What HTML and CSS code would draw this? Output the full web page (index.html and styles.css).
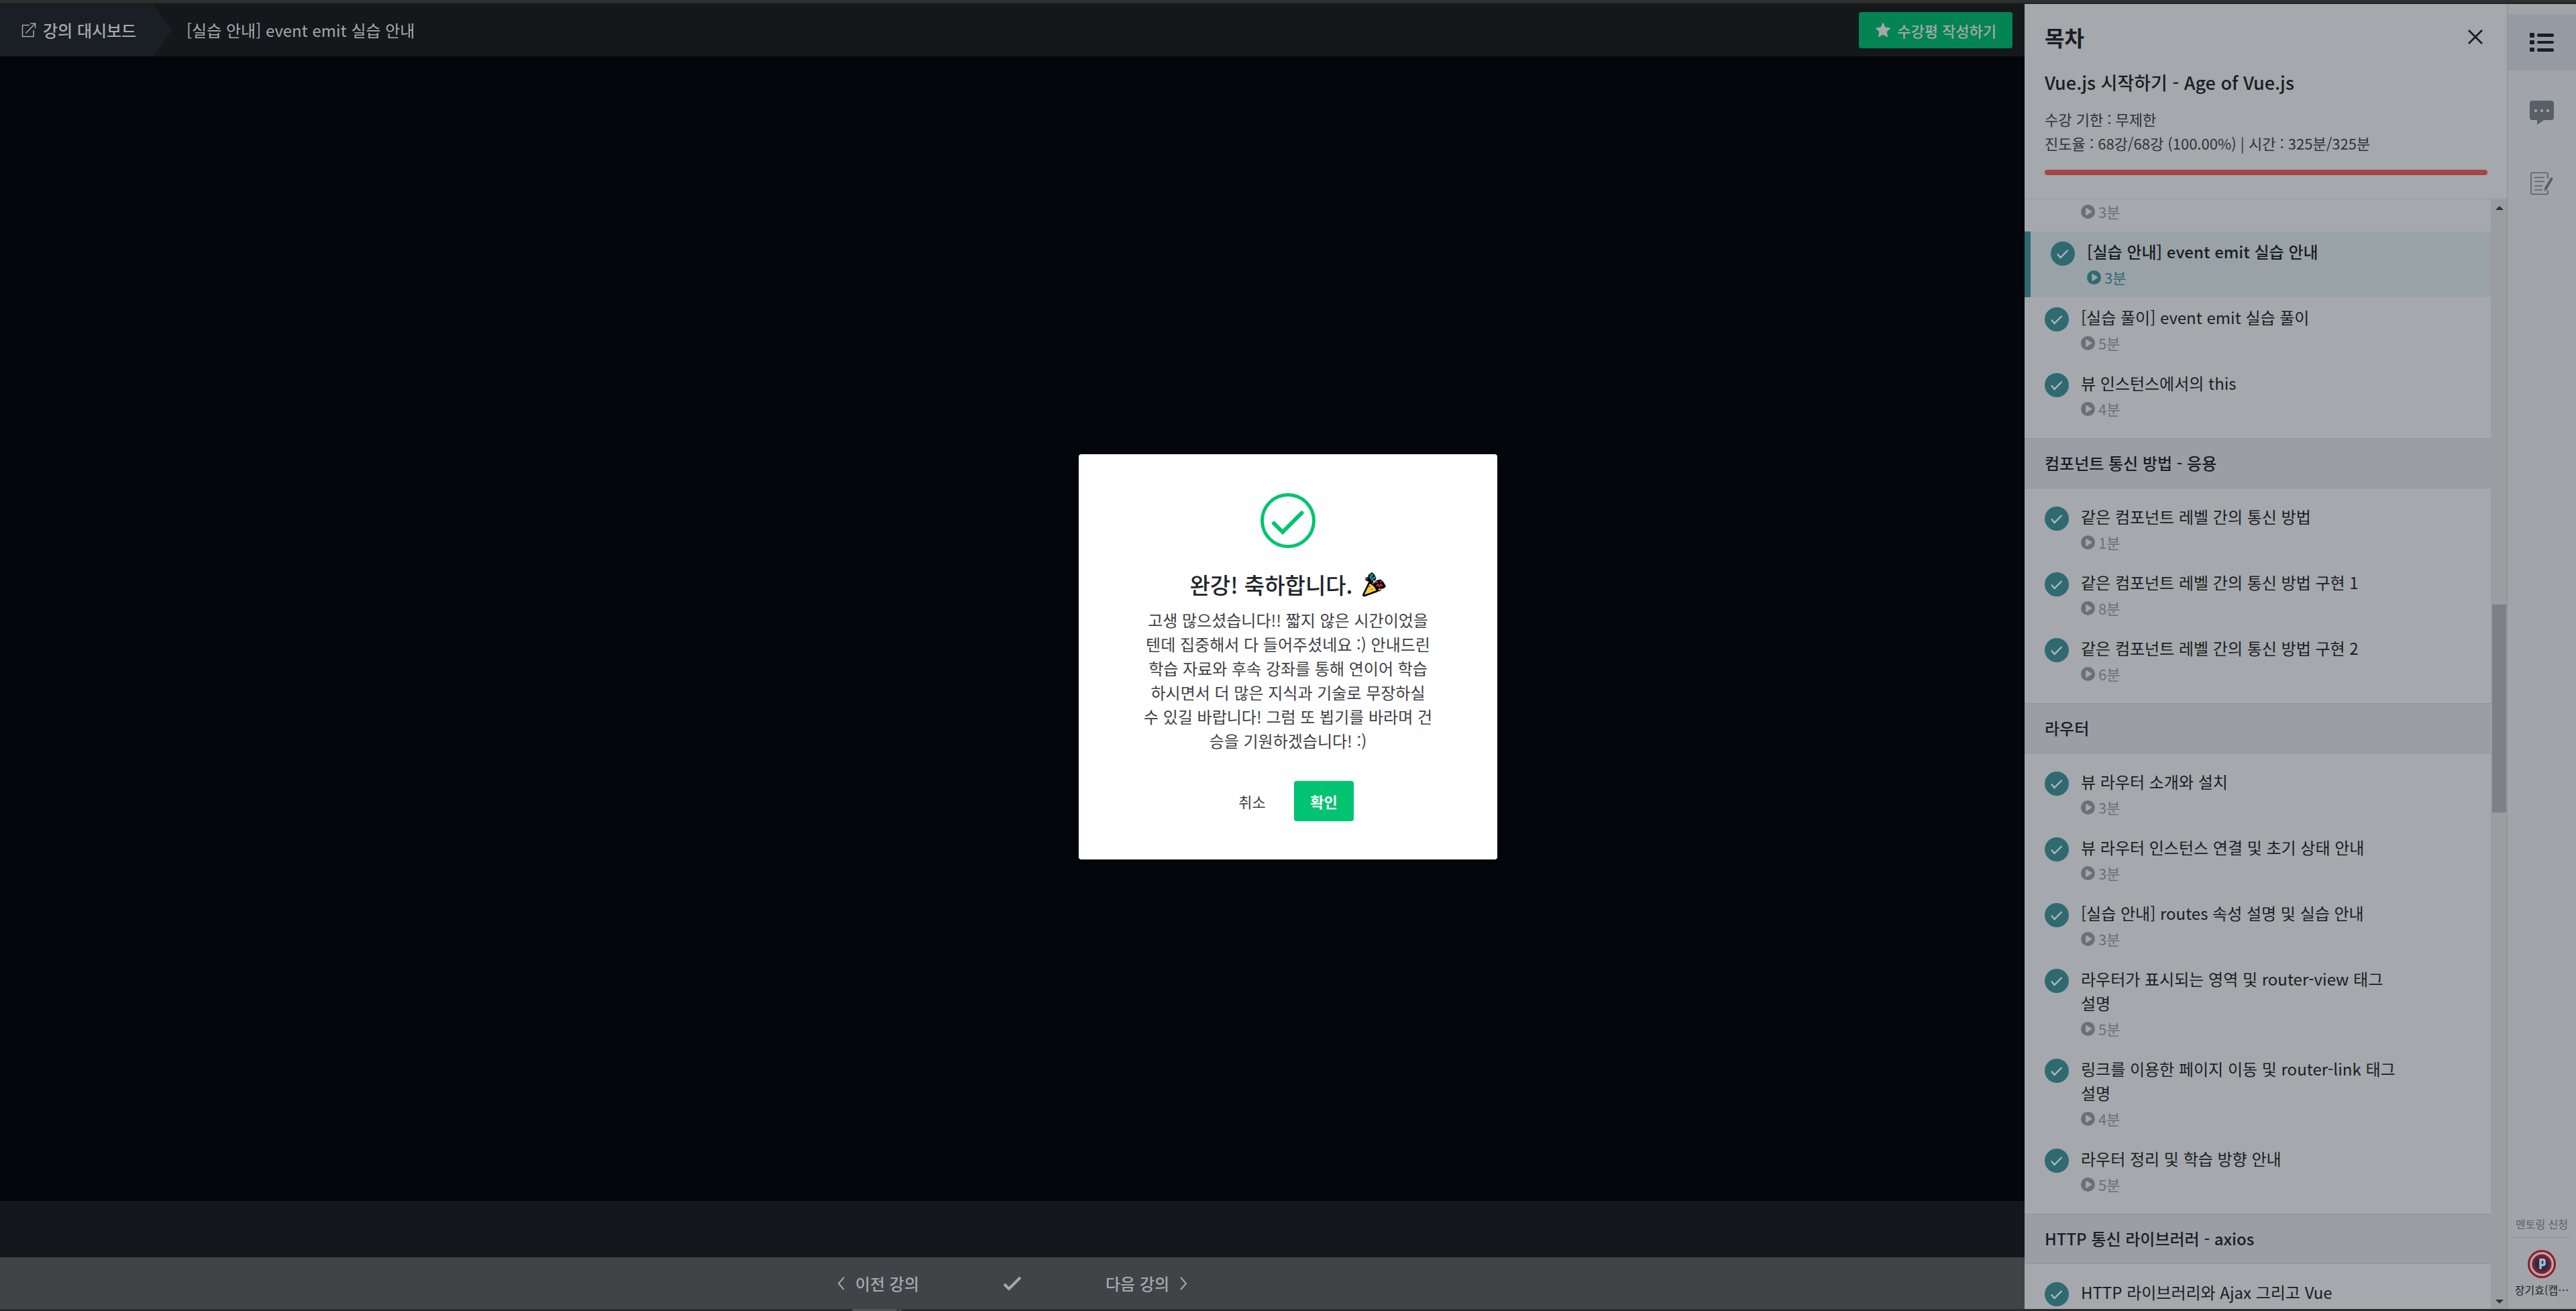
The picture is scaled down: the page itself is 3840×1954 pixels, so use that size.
FILE: index.html
```html
<!DOCTYPE html>
<html lang="ko">
<head>
<meta charset="utf-8">
<title>[실습 안내] event emit 실습 안내</title>
<link rel="stylesheet" href="styles.css">
</head>
<body>
<svg class="sprite" aria-hidden="true">
  <symbol id="i-check" viewBox="0 0 36 36"><circle cx="18" cy="18" r="18" fill="#2f6a71"/><path d="M10 18.500l4.500 5.500L25.500 13" fill="none" stroke="#b4babd" stroke-width="2.200"/></symbol>
  <symbol id="i-play" viewBox="0 0 21 21"><path fill-rule="evenodd" fill="currentColor" d="M10.500 0a10.500 10.500 0 1 0 0 21a10.500 10.500 0 1 0 0-21zM7.200 5.600c0-.6.6-.9 1.100-.6l7.600 4.800c.5.300.5 1 0 1.300l-7.600 4.800c-.5.300-1.100 0-1.100-.6z"/></symbol>
</svg>
<div class="page">
  <div class="top-edge"></div>
  <div class="app">
    <main class="player">
      <header class="topbar">
        <a class="crumb" href="#">
          <svg class="crumb-icon" viewBox="0 0 22 22" fill="none" stroke="currentColor" stroke-width="1.500"><path d="M12 3.500H1.500V20.500H18V11M13.500 1H20.500V8M20.500 1L6.500 15.500"/></svg>
          <span>강의 대시보드</span>
        </a>
        <h1 class="lecture">[실습 안내] event emit 실습 안내</h1>
        <button class="review" type="button">
          <svg class="star" viewBox="0 0 24 24" fill="currentColor"><path d="M12 1.200l3.200 6.900 7.400 1-5.400 5.200 1.300 7.500L12 18.200l-6.500 3.600 1.300-7.500L1.400 9.100l7.400-1z" stroke="currentColor" stroke-linejoin="round"/></svg>
          <span>수강평 작성하기</span>
        </button>
      </header>
      <div class="video"></div>
      <div class="controls"></div>
      <nav class="pager">
        <button type="button"><svg class="chev" viewBox="0 0 12 20" fill="none" stroke="currentColor" stroke-width="2"><path d="M10 1L2 10l8 9"/></svg><span>이전 강의</span></button>
        <button type="button" aria-label="완료"><svg class="tick" viewBox="0 0 28 22" fill="none" stroke="currentColor" stroke-width="4"><path d="M2 12l7 7L26 2"/></svg></button>
        <button type="button"><span>다음 강의</span><svg class="chev" viewBox="0 0 12 20" fill="none" stroke="currentColor" stroke-width="2"><path d="M2 1l8 9-8 9"/></svg></button>
      </nav>
    </main>

    <aside class="toc">
      <div class="toc-head">
        <div class="toc-title">
          <h2>목차</h2>
          <button class="close" type="button" aria-label="닫기"><svg viewBox="0 0 22 22" fill="none" stroke="currentColor" stroke-width="2.800"><path d="M1 1l20 20M21 1L1 21"/></svg></button>
        </div>
        <p class="course">Vue.js 시작하기 - Age of Vue.js</p>
        <p class="meta">수강 기한 : 무제한</p>
        <p class="meta">진도율 : 68강/68강 (100.00%) | 시간 : 325분/325분</p>
        <div class="progress"></div>
      </div>
      <div class="toc-body">
        <div class="list">
          <ul class="lessons lessons-first">
            <li class="partial"><span class="time"><svg><use href="#i-play"/></svg>3분</span></li>
            <li class="lesson current"><svg class="done"><use href="#i-check"/></svg><div class="text"><a href="#">[실습 안내] event emit 실습 안내</a><span class="time"><svg><use href="#i-play"/></svg>3분</span></div></li>
            <li class="lesson"><svg class="done"><use href="#i-check"/></svg><div class="text"><a href="#">[실습 풀이] event emit 실습 풀이</a><span class="time"><svg><use href="#i-play"/></svg>5분</span></div></li>
            <li class="lesson"><svg class="done"><use href="#i-check"/></svg><div class="text"><a href="#">뷰 인스턴스에서의 this</a><span class="time"><svg><use href="#i-play"/></svg>4분</span></div></li>
          </ul>
          <h3>컴포넌트 통신 방법 - 응용</h3>
          <ul class="lessons">
            <li class="lesson"><svg class="done"><use href="#i-check"/></svg><div class="text"><a href="#">같은 컴포넌트 레벨 간의 통신 방법</a><span class="time"><svg><use href="#i-play"/></svg>1분</span></div></li>
            <li class="lesson"><svg class="done"><use href="#i-check"/></svg><div class="text"><a href="#">같은 컴포넌트 레벨 간의 통신 방법 구현 1</a><span class="time"><svg><use href="#i-play"/></svg>8분</span></div></li>
            <li class="lesson"><svg class="done"><use href="#i-check"/></svg><div class="text"><a href="#">같은 컴포넌트 레벨 간의 통신 방법 구현 2</a><span class="time"><svg><use href="#i-play"/></svg>6분</span></div></li>
          </ul>
          <h3>라우터</h3>
          <ul class="lessons">
            <li class="lesson"><svg class="done"><use href="#i-check"/></svg><div class="text"><a href="#">뷰 라우터 소개와 설치</a><span class="time"><svg><use href="#i-play"/></svg>3분</span></div></li>
            <li class="lesson"><svg class="done"><use href="#i-check"/></svg><div class="text"><a href="#">뷰 라우터 인스턴스 연결 및 초기 상태 안내</a><span class="time"><svg><use href="#i-play"/></svg>3분</span></div></li>
            <li class="lesson"><svg class="done"><use href="#i-check"/></svg><div class="text"><a href="#">[실습 안내] routes 속성 설명 및 실습 안내</a><span class="time"><svg><use href="#i-play"/></svg>3분</span></div></li>
            <li class="lesson"><svg class="done"><use href="#i-check"/></svg><div class="text"><a href="#">라우터가 표시되는 영역 및 router-view 태그 설명</a><span class="time"><svg><use href="#i-play"/></svg>5분</span></div></li>
            <li class="lesson"><svg class="done"><use href="#i-check"/></svg><div class="text"><a href="#">링크를 이용한 페이지 이동 및 router-link 태그 설명</a><span class="time"><svg><use href="#i-play"/></svg>4분</span></div></li>
            <li class="lesson"><svg class="done"><use href="#i-check"/></svg><div class="text"><a href="#">라우터 정리 및 학습 방향 안내</a><span class="time"><svg><use href="#i-play"/></svg>5분</span></div></li>
          </ul>
          <h3>HTTP 통신 라이브러러 - axios</h3>
          <ul class="lessons">
            <li class="lesson"><svg class="done"><use href="#i-check"/></svg><div class="text"><a href="#">HTTP 라이브러리와 Ajax 그리고 Vue</a></div></li>
          </ul>
        </div>
        <div class="scrollbar" aria-hidden="true">
          <svg class="arrow" viewBox="0 0 12 6"><path d="M6 0l6 6H0z"/></svg>
          <div class="track"><div class="thumb"></div></div>
          <svg class="arrow" viewBox="0 0 12 6"><path d="M0 0h12L6 6z"/></svg>
        </div>
      </div>
    </aside>

    <nav class="rail">
      <button class="tab active" type="button" aria-label="목차"><svg viewBox="0 0 36 36" fill="currentColor"><rect x="0" y="4" width="7" height="7" rx="1"/><rect x="11" y="5" width="25" height="5" rx="2"/><rect x="0" y="15" width="7" height="6" rx="1"/><rect x="11" y="16" width="25" height="4" rx="2"/><rect x="0" y="26" width="7" height="6" rx="1"/><rect x="11" y="27" width="25" height="5" rx="2"/></svg></button>
      <button class="tab" type="button" aria-label="커뮤니티"><svg viewBox="0 0 36 36"><path fill="currentColor" d="M4 0h28a4 4 0 0 1 4 4v21a4 4 0 0 1-4 4H21l-10 7v-7H4a4 4 0 0 1-4-4V4a4 4 0 0 1 4-4z"/><g fill="#a1a4a8"><circle cx="9" cy="15" r="2.200"/><circle cx="18" cy="15" r="2.200"/><circle cx="27" cy="15" r="2.200"/></g></svg></button>
      <button class="tab" type="button" aria-label="노트"><svg viewBox="0 0 36 36" fill="none" stroke="currentColor" stroke-width="1.600"><path d="M27 11V4a1.500 1.500 0 0 0-1.500-1.500h-22A1.500 1.500 0 0 0 2 4v29a1.500 1.500 0 0 0 1.500 1.500h22A1.500 1.500 0 0 0 27 33v-4M7 9.500h15M7 15.500h15M7 22h12M7 28h12"/><path d="M32.500 11.500L24.500 25" stroke-width="4" stroke-linecap="round"/><path fill="currentColor" stroke="none" d="M22.500 24l4 2.500-4.500 4z"/></svg></button>
      <div class="rail-foot">
        <a href="#" class="mentor">멘토링 신청</a>
        <hr>
        <svg class="avatar" viewBox="0 0 42 42"><circle cx="21" cy="21" r="21" fill="#8f1822"/><circle cx="21" cy="21" r="18" fill="#a9a9ad"/><circle cx="21" cy="21" r="14.500" fill="#8f1822"/><circle cx="21" cy="21" r="10.500" fill="#1c3159"/><path d="M19 28.500V14.500h4a2 2 0 0 1 2 2v4a2 2 0 0 1-2 2h-4" fill="none" stroke="#b4b6ba" stroke-width="3.500"/></svg>
        <span class="user">장기효(캡…</span>
      </div>
    </nav>
  </div>
  <div class="bottom-edge"><i class="task"></i><i class="task-next"></i></div>
</div>

<div class="overlay">
  <section class="modal" role="dialog" aria-modal="true" aria-labelledby="done-title">
    <svg class="modal-icon" viewBox="0 0 82 82" fill="none" stroke="#00c471"><circle cx="41" cy="41" r="38.500" stroke-width="5"/><path d="M20 45l13 13L61.500 29.500" stroke-width="6" stroke-linecap="round"/></svg>
    <h2 id="done-title">완강! 축하합니다.
      <svg class="party" viewBox="0 0 36 37">
        <path d="M10 3.500L15 0l4 3.500 2.500 5-1.500 4-5 4-5-2.500-4.500-2V8l4-1z"/>
        <path d="M17 17l5-5 6-1.500 4 3.500 4 7-3 3-4 .5-1 3.500-5 .5-6-6z"/>
        <path d="M11 15.500L2.500 33c-.5 1.200.4 2.200 1.700 1.800L23 28c-1-5-6-11.500-12-12.500z" fill="#ffc83d" stroke="#000" stroke-width="2.600" stroke-linejoin="round"/>
        <path d="M12 4c5-2 5 1 2 2s-2 3 1 2.500 2 2-1 3.500" fill="none" stroke="#28b4d8" stroke-width="1.600"/>
        <path d="M16.500 17.500c2-3.500 5-3.500 8-2.500" fill="none" stroke="#7a5ad0" stroke-width="1.800"/>
        <path d="M22 21c2-5 3-3 3.500-1s2 1 2.500-1 2-1 2.500 2" fill="none" stroke="#e83323" stroke-width="1.800"/>
        <circle cx="19" cy="8" r="1.400" fill="#28b4d8"/><circle cx="7.500" cy="10" r="1.400" fill="#5b4aa0"/><circle cx="18" cy="13" r="1.600" fill="#f2d22e"/><circle cx="28.500" cy="14" r="1.400" fill="#e83323"/><circle cx="26.500" cy="25.500" r="1.600" fill="#f2d22e"/><circle cx="11" cy="21" r="1.300" fill="#e83323"/><circle cx="14.500" cy="25.500" r="1.300" fill="#28b4d8"/>
      </svg>
    </h2>
    <p>고생 많으셨습니다!! 짧지 않은 시간이었을텐데 집중해서 다 들어주셨네요 :) 안내드린 학습 자료와 후속 강좌를 통해 연이어 학습하시면서 더 많은 지식과 기술로 무장하실 수 있길 바랍니다! 그럼 또 뵙기를 바라며 건승을 기원하겠습니다! :)</p>
    <div class="actions">
      <button class="cancel" type="button">취소</button>
      <button class="confirm" type="button">확인</button>
    </div>
  </section>
</div>
</body>
</html>
```
FILE: styles.css
```css
* { box-sizing: border-box; margin: 0; padding: 0; }
body { font-family: "Noto Sans CJK KR", "Noto Sans", sans-serif; font-size: 24px; line-height: 36px; background: #03060a; color: #1a1d22; }
button { font: inherit; color: inherit; background: none; border: 0; }
a { color: inherit; text-decoration: none; }
ul { list-style: none; }
svg { display: block; flex: none; }
.sprite { display: none; }

.page { display: flex; flex-direction: column; height: 100vh; overflow: hidden; }
.top-edge { flex: none; height: 6px; background: #2f2f2f; border-bottom: 2px solid #222224; }
.bottom-edge { flex: none; display: flex; gap: 2px; height: 3px; padding-left: 1271px; background: #2a2c2c; }
.task { width: 66px; background: #50524f; }
.task-next { width: 5px; background: #444546; }
.app { flex: 1; display: flex; min-height: 0; }

.player { flex: 1; min-width: 0; display: flex; flex-direction: column; color: #a5a8ac; }
.topbar { display: flex; align-items: center; height: 78px; padding-right: 18px; background: #14181b; }
.crumb { display: flex; align-items: center; gap: 10px; width: 257px; height: 100%; padding-left: 32px; font-weight: 500; background: #1a1e25; clip-path: polygon(0 0, 228px 0, 100% 50%, 228px 100%, 0 100%); }
.crumb-icon { width: 22px; height: 22px; }
.lecture { flex: 1; padding-left: 21px; font-size: 24px; font-weight: 400; }
.review { display: flex; align-items: center; gap: 9px; height: 54px; padding: 0 24px; border-radius: 4px; background: #048452; font-size: 22px; font-weight: 500; }
.star { width: 24px; height: 24px; }
.video { flex: 1; background: #03060a; }
.controls { height: 84px; background: #14171b; }
.pager { display: flex; align-items: center; justify-content: center; gap: 125px; height: 77px; background: #414347; font-weight: 500; }
.pager button { display: flex; align-items: center; gap: 15px; }
.chev { width: 12px; height: 20px; }
.tick { width: 28px; height: 22px; }

.toc { width: 720px; display: flex; flex-direction: column; background: #a5a8ac; border-right: 1px solid #8b8e92; }
.toc-head { height: 291px; padding: 24px 29px 0 30px; border-bottom: 1px solid #9b9ea1; }
.toc-title { display: flex; align-items: center; justify-content: space-between; height: 50px; }
.toc-title h2 { font-size: 32px; font-weight: 700; line-height: 48px; }
.close { padding: 7px; }
.close svg { width: 22px; height: 22px; }
.course { margin-top: 22px; font-size: 27px; font-weight: 500; line-height: 42px; }
.meta { font-size: 22px; color: #2f3338; }
.course + .meta { margin-top: 15px; }
.progress { height: 8px; margin-top: 22px; border-radius: 4px; background: #a34644; }
.toc-body { flex: 1; display: flex; min-height: 0; }
.list { flex: 1; min-width: 0; overflow: hidden; }
.list h3 { height: 75px; padding: 18px 30px; font-size: 24px; font-weight: 500; border: solid #919398; border-width: 1px 0; background: #9b9ea5; }
.lessons { padding: 12px 0 14px; }
.lessons-first { padding-top: 0; }
.lesson { display: flex; gap: 18px; padding: 12px 130px 14px 30px; }
.partial { padding: 2px 0 14px 84px; }
.current { border-left: 9px solid #2f6a71; background: #99a2a7; font-weight: 500; }
.done { width: 36px; height: 36px; margin-top: 3px; }
.text { display: flex; flex-direction: column; gap: 4px; word-break: keep-all; }
.time { display: flex; align-items: center; gap: 5px; font-size: 22px; font-weight: 400; line-height: 32px; color: #6b7078; }
.time svg { width: 21px; height: 21px; }
.current .time { color: #2f6a71; }
.scrollbar { display: flex; flex-direction: column; align-items: center; width: 24px; padding: 10px 1px 8px 2px; background: #9b9ea1; }
.arrow { width: 12px; height: 6px; fill: #303236; }
.track { flex: 1; width: 100%; padding-top: 588px; }
.thumb { height: 310px; background: #7d8085; }

.rail { width: 102px; display: flex; flex-direction: column; gap: 21px; padding-top: 15px; background: #a1a4a8; color: #585f67; }
.tab { display: flex; align-items: center; justify-content: center; height: 84px; }
.tab svg { width: 36px; height: 36px; }
.active { background: #969aa3; color: #1a1e25; }
.rail-foot { display: flex; flex-direction: column; align-items: center; margin-top: auto; padding-bottom: 17px; font-size: 16px; line-height: 24px; }
.rail-foot hr { width: 84px; margin: 8px 0 18px; border: 0; border-top: 1px solid #8b8e92; }
.avatar { width: 42px; height: 42px; }
.user { margin-top: 5px; color: #1e2126; white-space: nowrap; }

.overlay { position: fixed; inset: 6px 0 3px; display: flex; align-items: center; justify-content: center; }
.modal { display: flex; flex-direction: column; align-items: center; width: 624px; padding: 58px 96px 57px; border-radius: 4px; background: #fff; color: #3e4045; text-align: center; }
.modal-icon { width: 82px; height: 82px; }
.modal h2 { display: flex; align-items: center; gap: 14px; margin: 32px 0 12px; font-size: 33px; font-weight: 500; line-height: 45px; color: #212529; }
.party { width: 36px; height: 37px; }
.actions { display: flex; gap: 18px; margin-top: 42px; }
.actions button { min-width: 89px; height: 60px; border-radius: 4px; font-size: 22px; }
.actions .confirm { background: #00c471; color: #fff; font-weight: 700; }
```
